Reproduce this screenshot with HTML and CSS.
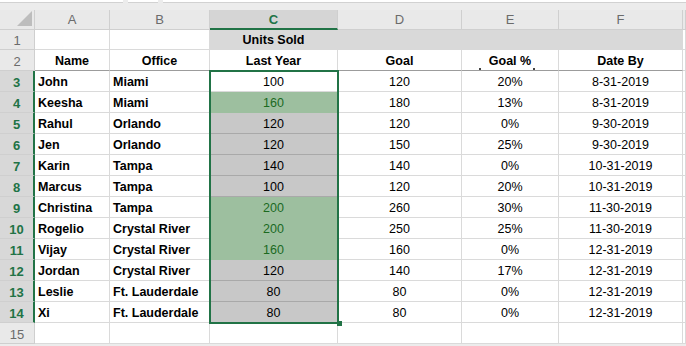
FILE: index.html
```html
<!DOCTYPE html>
<html lang="en">
<head>
    <meta charset="UTF-8">
    <meta name="viewport" content="width=device-width, initial-scale=1.0">
    <title>Units Sold</title>
    <link rel="stylesheet" href="styles.css">
</head>
<body>
    <div class="topbar">
        <span class="box-name"></span>
        <span class="box-fx"></span>
        <span class="box-formula"></span>
    </div>

    <div class="sheet">
        <!-- column headers -->
        <div class="cell corner"></div>
        <div class="cell ch">A</div>
        <div class="cell ch">B</div>
        <div class="cell ch active">C</div>
        <div class="cell ch">D</div>
        <div class="cell ch">E</div>
        <div class="cell ch">F</div>
        <div class="cell ch"></div>

        <!-- row 1 -->
        <div class="cell rh">1</div>
        <div class="cell"></div>
        <div class="cell"></div>
        <div class="cell fill bold">Units Sold</div>
        <div class="cell fill"></div>
        <div class="cell fill"></div>
        <div class="cell fill"></div>
        <div class="cell"></div>

        <!-- row 2 -->
        <div class="cell rh">2</div>
        <div class="cell head">Name</div>
        <div class="cell head">Office</div>
        <div class="cell head">Last Year</div>
        <div class="cell head">Goal</div>
        <div class="cell head dots">Goal %</div>
        <div class="cell head">Date By</div>
        <div class="cell"></div>

        <div class="cell rh active">3</div>
        <div class="cell txt">John</div>
        <div class="cell txt">Miami</div>
        <div class="cell">100</div>
        <div class="cell">120</div>
        <div class="cell">20%</div>
        <div class="cell">8-31-2019</div>
        <div class="cell"></div>

        <div class="cell rh active">4</div>
        <div class="cell txt">Keesha</div>
        <div class="cell txt">Miami</div>
        <div class="cell good">160</div>
        <div class="cell">180</div>
        <div class="cell">13%</div>
        <div class="cell">8-31-2019</div>
        <div class="cell"></div>

        <div class="cell rh active">5</div>
        <div class="cell txt">Rahul</div>
        <div class="cell txt">Orlando</div>
        <div class="cell sel">120</div>
        <div class="cell">120</div>
        <div class="cell">0%</div>
        <div class="cell">9-30-2019</div>
        <div class="cell"></div>

        <div class="cell rh active">6</div>
        <div class="cell txt">Jen</div>
        <div class="cell txt">Orlando</div>
        <div class="cell sel">120</div>
        <div class="cell">150</div>
        <div class="cell">25%</div>
        <div class="cell">9-30-2019</div>
        <div class="cell"></div>

        <div class="cell rh active">7</div>
        <div class="cell txt">Karin</div>
        <div class="cell txt">Tampa</div>
        <div class="cell sel">140</div>
        <div class="cell">140</div>
        <div class="cell">0%</div>
        <div class="cell">10-31-2019</div>
        <div class="cell"></div>

        <div class="cell rh active">8</div>
        <div class="cell txt">Marcus</div>
        <div class="cell txt">Tampa</div>
        <div class="cell sel">100</div>
        <div class="cell">120</div>
        <div class="cell">20%</div>
        <div class="cell">10-31-2019</div>
        <div class="cell"></div>

        <div class="cell rh active">9</div>
        <div class="cell txt">Christina</div>
        <div class="cell txt">Tampa</div>
        <div class="cell good">200</div>
        <div class="cell">260</div>
        <div class="cell">30%</div>
        <div class="cell">11-30-2019</div>
        <div class="cell"></div>

        <div class="cell rh active">10</div>
        <div class="cell txt">Rogelio</div>
        <div class="cell txt">Crystal River</div>
        <div class="cell good">200</div>
        <div class="cell">250</div>
        <div class="cell">25%</div>
        <div class="cell">11-30-2019</div>
        <div class="cell"></div>

        <div class="cell rh active">11</div>
        <div class="cell txt">Vijay</div>
        <div class="cell txt">Crystal River</div>
        <div class="cell good">160</div>
        <div class="cell">160</div>
        <div class="cell">0%</div>
        <div class="cell">12-31-2019</div>
        <div class="cell"></div>

        <div class="cell rh active">12</div>
        <div class="cell txt">Jordan</div>
        <div class="cell txt">Crystal River</div>
        <div class="cell sel">120</div>
        <div class="cell">140</div>
        <div class="cell">17%</div>
        <div class="cell">12-31-2019</div>
        <div class="cell"></div>

        <div class="cell rh active">13</div>
        <div class="cell txt">Leslie</div>
        <div class="cell txt">Ft. Lauderdale</div>
        <div class="cell sel">80</div>
        <div class="cell">80</div>
        <div class="cell">0%</div>
        <div class="cell">12-31-2019</div>
        <div class="cell"></div>

        <div class="cell rh active">14</div>
        <div class="cell txt">Xi</div>
        <div class="cell txt">Ft. Lauderdale</div>
        <div class="cell sel">80</div>
        <div class="cell">80</div>
        <div class="cell">0%</div>
        <div class="cell">12-31-2019</div>
        <div class="cell"></div>

        <div class="cell rh">15</div>
        <div class="cell"></div>
        <div class="cell"></div>
        <div class="cell"></div>
        <div class="cell"></div>
        <div class="cell"></div>
        <div class="cell"></div>
        <div class="cell"></div>

        <!-- selection C3:C14 -->
        <div class="selection"></div>
        <div class="handle"></div>
    </div>
</body>
</html>
```

FILE: styles.css
```css
body {
    margin: 0;
    height: 346px;
    overflow: hidden;
    background-color: #ececec;
    font-family: "Liberation Sans", Arial, sans-serif;
    font-size: 12.5px;
}
.topbar {
    height: 10px;
    display: flex;
    gap: 5px;
}
.topbar span {
    height: 2px;
    background-color: #fff;
    border-bottom: 1px solid #d2d2d2;
}
.box-name {
    width: 123px;
}
.box-fx {
    width: 30px;
}
.box-formula {
    flex: 1;
}
.sheet {
    position: relative;
    display: grid;
    grid-template-columns: 35px 75px 100px 128px 124px 97px 124px 1fr;
    grid-template-rows: 20px 20px repeat(14, 21px);
    background-color: #fff;
}
.cell {
    box-sizing: border-box;
    display: flex;
    align-items: center;
    justify-content: center;
    padding-top: 1px;
    border-right: 1px solid #dadada;
    border-bottom: 1px solid #dadada;
    color: #000;
    white-space: nowrap;
    overflow: hidden;
}
.bold {
    font-weight: bold;
}
.corner,
.ch,
.rh {
    background-color: #e9e9e9;
    border-color: #cfcfcf;
    color: #6b6b6b;
}
.corner {
    justify-content: flex-end;
    align-items: flex-end;
    padding: 0 2px 3px 0;
}
.corner::after {
    content: "";
    width: 15px;
    height: 15px;
    background-color: #bdbdbd;
    clip-path: polygon(100% 0, 100% 100%, 0 100%);
}
.ch {
    font-size: 13px;
    padding-top: 0;
}
.ch.active {
    background-color: #d5d5d5;
    color: #217346;
    font-weight: bold;
    border-bottom: 2px solid #217346;
}
.rh {
    font-size: 13px;
    padding-top: 2px;
}
.rh.active {
    background-color: #d8d8d8;
    color: #217346;
    font-weight: bold;
    border-right: 2px solid #217346;
}
.fill {
    background-color: #d9d9d9;
    border-color: #d9d9d9;
}
.head {
    font-weight: bold;
    border-bottom-color: #9c9c9c;
}
.dots {
    position: relative;
}
.dots::before,
.dots::after {
    content: "";
    position: absolute;
    top: 18px;
    width: 2px;
    height: 2px;
    background-color: #444;
}
.dots::before {
    left: 17px;
}
.dots::after {
    left: 71px;
}
.txt {
    justify-content: flex-start;
    padding-left: 3px;
    font-weight: bold;
}
.sel {
    background-color: #c8c8c8;
    border-bottom-color: #a9a9a9;
}
.good {
    background-color: #9dbf9f;
    border-bottom-color: #9dbf9f;
    color: #1b6a1f;
}
.selection {
    position: absolute;
    left: 209px;
    top: 60px;
    width: 130px;
    height: 254px;
    box-sizing: border-box;
    border: 2px solid #217346;
}
.handle {
    position: absolute;
    left: 337px;
    top: 311px;
    width: 5px;
    height: 5px;
    background-color: #217346;
}
```
